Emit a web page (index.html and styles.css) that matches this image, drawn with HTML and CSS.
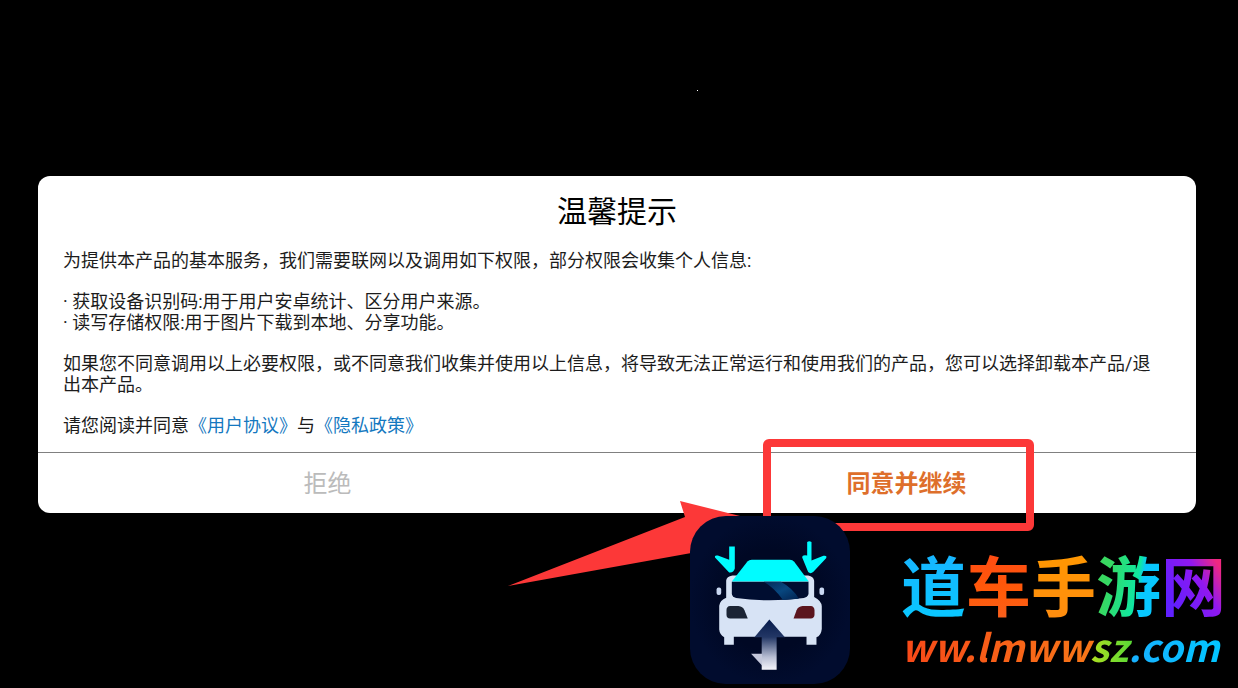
FILE: index.html
```html
<!DOCTYPE html>
<html lang="zh-CN">
<head>
    <meta charset="UTF-8">
    <meta name="viewport" content="width=device-width, initial-scale=1.0">
    <title>温馨提示</title>
    <link rel="stylesheet" href="styles.css">
</head>
<body>
    <div class="speck"></div>

    <div class="dialog" role="dialog" aria-labelledby="dialog-title">
        <div class="content">
            <h1 id="dialog-title">温馨提示</h1>
            <p>为提供本产品的基本服务，我们需要联网以及调用如下权限，部分权限会收集个人信息:</p>
            <p>· 获取设备识别码:用于用户安卓统计、区分用户来源。<br>· 读写存储权限:用于图片下载到本地、分享功能。</p>
            <p>如果您不同意调用以上必要权限，或不同意我们收集并使用以上信息，将导致无法正常运行和使用我们的产品，您可以选择卸载本产品/退出本产品。</p>
            <p>请您阅读并同意<a href="#">《用户协议》</a>与<a href="#">《隐私政策》</a></p>
        </div>
        <div class="actions">
            <button type="button" class="refuse">拒绝</button>
            <div class="accept-cell">
                <button type="button" class="accept">同意并继续</button>
                <div class="highlight"></div>
                <svg class="arrow" width="240" height="90" viewBox="0 0 240 90">
                    <path d="M0 86L177 17L172 1L240 18L200 50L0 86Z" fill="#fc3838"/>
                </svg>
                <svg class="app-icon" width="160" height="168" viewBox="30 32 482 506">
                    <defs>
                        <radialGradient id="tile">
                            <stop offset="0.6" stop-color="#000824"/>
                            <stop offset="1" stop-color="#010c2e"/>
                        </radialGradient>
                        <linearGradient id="shine" x1="0" y1="0" x2="1" y2="1">
                            <stop offset="0" stop-color="#032a58"/>
                            <stop offset="0.5" stop-color="#08477f"/>
                            <stop offset="1" stop-color="#02214f"/>
                        </linearGradient>
                        <linearGradient id="road" x1="0" y1="0" x2="0" y2="1">
                            <stop offset="0" stop-color="#061b4c"/>
                            <stop offset="0.35" stop-color="#233765"/>
                            <stop offset="0.75" stop-color="#b9bfd4"/>
                            <stop offset="1" stop-color="#f4f4fa"/>
                        </linearGradient>
                    </defs>
                    <rect x="30" y="32" width="482" height="506" rx="108" fill="url(#tile)"/>
                    <path d="M148 124H165V190Q161 204 148 202L106 158Q102 149 114 151L148 164Z" fill="#00fcff"/>
                    <path d="M383 110Q389 106 396 110V166L432 152Q444 150 440 159L401 201Q393 208 386 201L368 157Q368 148 383 151Z" fill="#00fcff"/>
                    <path d="M139 226Q140 214 158 211H386Q402 214 404 227V276Q426 287 427 304V372Q425 392 411 397V420H381V396H162V420H133V397Q119 389 118 374V302Q120 286 139 278Z" fill="#d7e3f5"/>
                    <path d="M156 229L203 169Q208 164 216 164H331Q339 164 344 170L388 229Z" fill="#00fcff"/>
                    <path d="M156 230H387V266Q386 275 373 279Q270 293 169 279Q156 276 156 265Z" fill="#000d30"/>
                    <path d="M252 230H304Q340 250 358 281L310 285Q284 248 252 230Z" fill="url(#shine)"/>
                    <rect x="110" y="247" width="14" height="23" rx="6" fill="#c9d8f2"/>
                    <rect x="420" y="247" width="14" height="23" rx="6" fill="#c9d8f2"/>
                    <path d="M151 303H176Q189 304 194 316L204 341H151Q140 340 140 330V315Q140 304 151 303Z" fill="#1b2434"/>
                    <path d="M369 303H394Q404 304 405 315V330Q404 340 394 341H342L351 316Q356 304 369 303Z" fill="#5b151e"/>
                    <path d="M269 344L316 397H291V495H246V397H224Z" fill="url(#road)"/>
                    <path d="M214 447H247V482Z" fill="#c3c7da"/>
                </svg>
            </div>
        </div>
    </div>

    <div class="watermark">
        <div class="site-name"><span class="c1">道</span><span class="c2">车</span><span class="c3">手</span><span class="c4">游</span><span class="c5">网</span></div>
        <div class="site-url"><span class="u1">ww.lmww</span><span class="u2">sz</span><span class="u3">.com</span></div>
    </div>
</body>
</html>
```
FILE: styles.css
```css
* {
    box-sizing: border-box;
}

body {
    margin: 0;
    min-height: 100vh;
    padding: 20px 42px 20px 38px;
    display: flex;
    align-items: center;
    position: relative;
    overflow: hidden;
    background-color: #000;
    font-family: Roboto, "Noto Sans CJK SC", sans-serif;
}

.speck {
    position: absolute;
    left: 697px;
    top: 90px;
    width: 1px;
    height: 1px;
    background-color: #fff;
}

.dialog {
    width: 100%;
    background-color: #fff;
    border-radius: 12px;
}

.content {
    padding: 18px 36px 16px 25px;
}

h1 {
    margin: 0 -11px 20px 0;
    font-size: 30px;
    font-weight: normal;
    line-height: 36px;
    text-align: center;
    color: #000;
}

p {
    margin: 0 0 20px;
    font-size: 18px;
    line-height: 21px;
    color: #1c1c1c;
}

p:last-child {
    margin-bottom: 0;
}

a {
    color: #1478c0;
    text-decoration: none;
}

.actions {
    display: grid;
    grid-template-columns: 1fr 1fr;
    border-top: 1px solid #808080;
}

.accept-cell {
    position: relative;
}

button {
    width: 100%;
    height: 60px;
    padding: 0 0 2px;
    border: none;
    background: none;
    font-family: inherit;
    font-size: 24px;
    cursor: pointer;
}

.refuse {
    color: #bbb;
}

.accept {
    font-weight: bold;
    color: #de6f2b;
}

/* Marks drawn over the dialog */
.highlight {
    position: absolute;
    left: 146px;
    top: -14px;
    width: 271px;
    height: 92px;
    border: 8px solid #fc3838;
    border-radius: 6px;
    pointer-events: none;
}

.arrow {
    position: absolute;
    left: -109px;
    top: 47px;
    pointer-events: none;
}

.app-icon {
    position: absolute;
    left: 73px;
    top: 63px;
}

.watermark {
    position: absolute;
    right: 12px;
    bottom: 18px;
    font-family: "Noto Sans CJK SC", sans-serif;
    font-weight: bold;
    white-space: nowrap;
}

.site-name {
    display: flex;
    font-size: 65px;
    line-height: 66px;
}

.site-url {
    display: flex;
    font-size: 38px;
    font-style: italic;
    line-height: 48px;
}

.site-name span,
.site-url span {
    background-clip: text;
    -webkit-background-clip: text;
    color: transparent;
}

/* room for the strokes that reach past the line box */
.site-name span {
    padding-bottom: 6px;
}

.site-url span {
    padding-right: 8px;
    margin-right: -8px;
}

.c1 {
    background-image: linear-gradient(#18b4ff, #08c8ff);
}

.c2 {
    background-image: linear-gradient(#ff4a14, #ff5a08 60%, #f86020);
}

.c3 {
    background-image: linear-gradient(#ff9800, #ff8c10);
}

.c4 {
    background-image: linear-gradient(100deg, #38d860 20%, #10e8a0 60%, #08c8ff 68%);
}

.c5 {
    background-image: linear-gradient(60deg, #6020ff 20%, #9018f0 60%, #f02880 85%);
}

.u1 {
    background-image: linear-gradient(90deg, #f84818, #f87818);
}

.u2 {
    background-image: linear-gradient(90deg, #b0e020, #50d838);
}

.u3 {
    background-image: linear-gradient(90deg, #18b0ff, #00c8ff);
}
```
